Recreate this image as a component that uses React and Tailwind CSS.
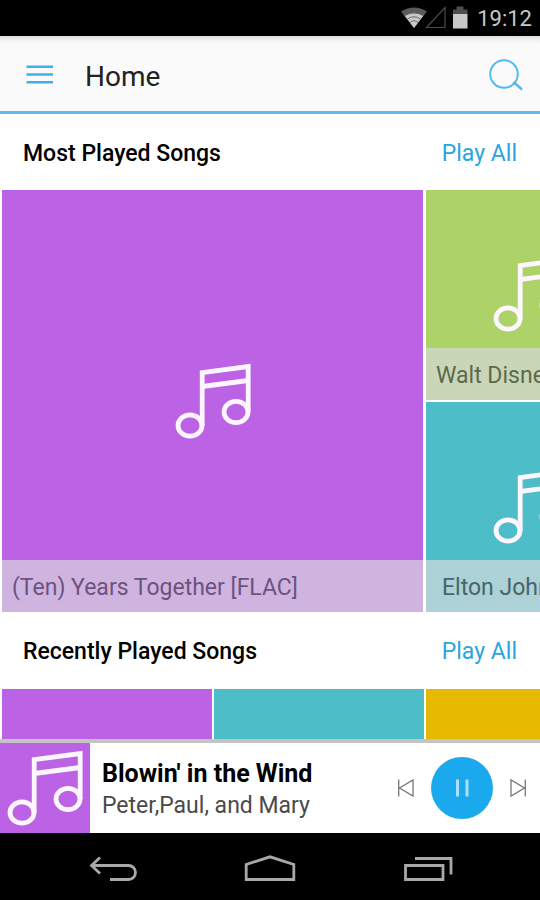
import React, { useState } from 'react';

const MusicNote = () => (
  <svg className="h-20 w-20 shrink-0" viewBox="0 0 80 80" fill="none" stroke="#fdf5ff" strokeWidth="4.8">
    <ellipse cx="17" cy="64.5" rx="12" ry="10.7" />
    <ellipse cx="63" cy="51" rx="12" ry="10.7" />
    <path d="M29.2 65V11.500L75.200 5.500V51" />
    <path d="M29.2 25.500L75.200 19.500" />
  </svg>
);

const StatusBar = () => (
  <div className="flex h-9 shrink-0 items-center justify-end bg-black pr-2">
    <svg className="h-6 w-[68px]" viewBox="0 0 68 24">
      <path d="M0 5.5Q13 -2.5 26 5.5L13 22Z" fill="#5a5a5a" />
      <path d="M3.5 9.5Q13 4 22.5 9.5L13 22Z" fill="#c8c8c8" />
      <path d="M4 9.5Q13 4.500 22 9.500M6.500 13Q13 8.500 19.500 13M9 16.500Q13 13 17 16.500" stroke="#555" strokeWidth="0.800" fill="none" />
      <path d="M25.500 21.500H44V1.500Z" fill="none" stroke="#4a4a4a" strokeWidth="1.200" />
      <path d="M52 8V3.500H55.500V0.500H62.500V3.500H66.500V8Z" fill="#4d4d4d" />
      <rect x="52" y="8" width="14.500" height="14.500" fill="#c8c8c8" />
    </svg>
    <span className="ml-2 pt-0.5 text-[22px] leading-8 text-[#c8c8c8]">19:12</span>
  </div>
);

const Header = () => (
  <header className="flex h-[78px] shrink-0 items-center border-b-[3px] border-[#5fb8ee] bg-[#fafafa] pt-0.5 pr-4 pl-6 shadow-[inset_0_8px_6px_-6px_rgba(0,0,0,0.15)]">
    <button type="button" aria-label="Menu" className="p-0.5">
      <svg className="h-7 w-7" viewBox="0 0 28 28" fill="none" stroke="#3fb0ea" strokeWidth="2.4">
        <path d="M0.500 5.700H27M0.500 13.500H27M0.500 21.300H27" />
      </svg>
    </button>
    <h1 className="ml-[29px] flex-1 pt-1 text-[28px] leading-9 text-[#222]">Home</h1>
    <button type="button" aria-label="Search">
      <svg className="h-9 w-9" viewBox="0 0 36 36" fill="none" stroke="#4fb8ee" strokeWidth="1.900">
        <circle cx="16" cy="17" r="13.800" />
        <path d="M25.500 25L34 32.500" strokeWidth="2.400" />
      </svg>
    </button>
  </header>
);

const SectionTitle = ({ title }) => (
  <div className="flex h-[76px] items-center justify-between px-[23px] pt-[3px]">
    <h2 className="text-[23px] leading-7 font-medium text-black">{title}</h2>
    <button type="button" className="text-[23px] leading-7 text-[#2ba5e0]">
      Play All
    </button>
  </div>
);

const smallAlbums = [
  { title: 'Walt Disney', color: 'bg-[#acd268]', bar: 'bg-[#c9d6b8]', text: 'pl-[10px] text-[#5d6a4c]' },
  { title: 'Elton John', color: 'bg-[#4dbdc8]', bar: 'bg-[#acd1d6]', text: 'pl-4 text-[#44666c]' },
];

const MostPlayed = () => (
  <div className="flex gap-[3px] overflow-hidden pl-0.5">
    <div className="flex h-[422px] w-[421px] shrink-0 flex-col bg-[#bb62e5]">
      <div className="flex flex-1 items-center justify-center pt-[52px]">
        <MusicNote />
      </div>
      <div className="h-[52px] bg-[#cfb4e0] pt-0.5 pl-[10px] text-[23px] leading-[52px] text-[#6d5280]">
        (Ten) Years Together [FLAC]
      </div>
    </div>
    <div className="flex shrink-0 flex-col gap-0.5">
      {smallAlbums.map((album) => (
        <div key={album.title} className={`flex h-[210px] w-[210px] flex-col ${album.color}`}>
          <div className="flex flex-1 items-center justify-center pt-[50px]">
            <MusicNote />
          </div>
          <div className={`h-[52px] pt-0.5 text-[23px] leading-[52px] ${album.bar} ${album.text}`}>{album.title}</div>
        </div>
      ))}
    </div>
  </div>
);

const RecentlyPlayed = () => (
  <div className="flex gap-0.5 overflow-hidden pt-px pl-0.5">
    <div className="h-[210px] w-[210px] shrink-0 bg-[#bb62e5]"></div>
    <div className="h-[210px] w-[210px] shrink-0 bg-[#4dbdc8]"></div>
    <div className="h-[210px] w-[210px] shrink-0 bg-[#e6b800]"></div>
  </div>
);

const MiniPlayer = () => {
  const [playing, setPlaying] = useState(true);

  return (
    <div className="flex shrink-0 items-center border-t-4 border-[#c4c4c4] bg-white pr-[13px]">
      <div className="flex h-[90px] w-[90px] shrink-0 items-center justify-center bg-[#bb62e5]">
        <MusicNote />
      </div>
      <div className="min-w-0 flex-1 pt-1 pl-3">
        <p className="truncate text-[25px] leading-8 font-bold text-black">Blowin' in the Wind</p>
        <p className="truncate text-[23px] leading-8 text-[#4a4a4a]">Peter,Paul, and Mary</p>
      </div>
      <div className="flex items-center gap-4">
        <button type="button" aria-label="Previous">
          <svg className="h-5 w-[18px]" viewBox="0 0 18 20" fill="none" stroke="#777" strokeWidth="1.300">
            <path d="M1.700 1.500V18.500M16 2V18L2.500 10Z" />
          </svg>
        </button>
        <button
          type="button"
          aria-label={playing ? 'Pause' : 'Play'}
          onClick={() => setPlaying(!playing)}
          className="flex h-[62px] w-[62px] items-center justify-center rounded-full bg-[#1ba9ee]"
        >
          <svg className="h-5 w-4" viewBox="0 0 16 20" fill="#a9e0fb">
            {playing ? <path d="M2 1.500H5V18.500H2ZM11.500 1.500H14.500V18.500H11.500Z" /> : <path d="M2 1L15 10L2 19Z" />}
          </svg>
        </button>
        <button type="button" aria-label="Next">
          <svg className="h-5 w-[18px]" viewBox="0 0 18 20" fill="none" stroke="#777" strokeWidth="1.300">
            <path d="M16.300 1.500V18.500M2 2V18L15.500 10Z" />
          </svg>
        </button>
      </div>
    </div>
  );
};

const NavBar = () => (
  <nav className="flex h-[67px] shrink-0 items-center justify-center gap-[106px] bg-black pt-1">
    <button type="button" aria-label="Back">
      <svg className="h-7 w-[52px]" viewBox="0 0 52 28" fill="none" stroke="#a8a8a8" strokeWidth="2.800">
        <path d="M5 10.500H42.500A7 7 0 0 1 42.500 24.500H24M14 2.500L5.500 10.500L14 18.500" />
      </svg>
    </button>
    <button type="button" aria-label="Home screen">
      <svg className="h-7 w-[52px]" viewBox="0 0 52 28" fill="none" stroke="#a8a8a8" strokeWidth="2.800">
        <path d="M2.200 24.500V9.500L26 1.800L49.800 9.500V24.500Z" />
      </svg>
    </button>
    <button type="button" aria-label="Recent apps">
      <svg className="h-7 w-[52px]" viewBox="0 0 52 28" fill="none" stroke="#a8a8a8" strokeWidth="2.800">
        <path d="M3.500 10.500H41V24.500H3.500ZM13 3.500H49V19.500" />
      </svg>
    </button>
  </nav>
);

const App = () => {
  return (
    <div className="flex h-screen flex-col overflow-hidden bg-white font-['Roboto',sans-serif]">
      <StatusBar />
      <Header />
      <main className="min-h-0 flex-1 overflow-hidden">
        <SectionTitle title="Most Played Songs" />
        <MostPlayed />
        <SectionTitle title="Recently Played Songs" />
        <RecentlyPlayed />
      </main>
      <MiniPlayer />
      <NavBar />
    </div>
  );
};

export default App;
